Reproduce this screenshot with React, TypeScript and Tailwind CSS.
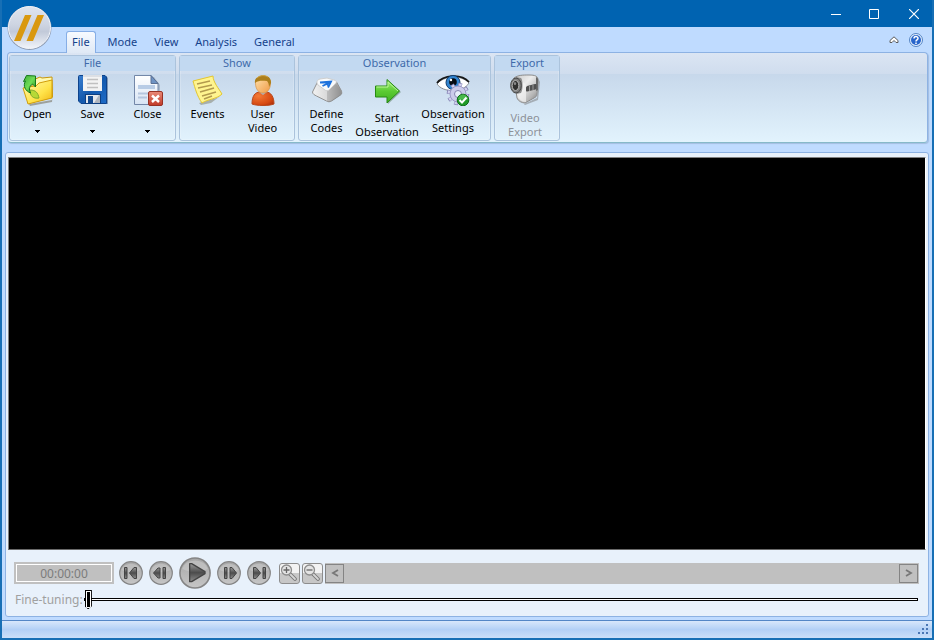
import React, { useState } from 'react'

const Logo = () => (
  <svg width="46" height="46" viewBox="0 0 46 46" aria-hidden="true">
    <defs>
      <linearGradient id="orb" x1="0" y1="0" x2="0" y2="1">
        <stop offset="0" stopColor="#dfe4ee" />
        <stop offset="0.42" stopColor="#ced5e2" />
        <stop offset="0.6" stopColor="#c2cad9" />
        <stop offset="1" stopColor="#f1f4fa" />
      </linearGradient>
    </defs>
    <circle cx="23.500" cy="23" r="22" fill="#8e9bb2" />
    <circle cx="23.500" cy="22.500" r="21" fill="url(#orb)" stroke="#f2f5fa" />
    <path d="M19 10h6.500L14.500 36H8zM31.500 10H38L27 36h-6.500z" fill="#d9980f" />
  </svg>
)

const OpenIcon = () => (
  <svg width="34" height="32" viewBox="0 0 34 32">
    <defs>
      <linearGradient id="folder" x1="0" y1="0" x2="1" y2="1">
        <stop offset="0" stopColor="#fffbb5" />
        <stop offset="0.6" stopColor="#ffe34a" />
        <stop offset="1" stopColor="#f0b310" />
      </linearGradient>
      <linearGradient id="leaf" x1="0" y1="0" x2="1" y2="1">
        <stop offset="0" stopColor="#3fae3a" />
        <stop offset="0.5" stopColor="#6fdc55" />
        <stop offset="1" stopColor="#138a1b" />
      </linearGradient>
    </defs>
    <path d="M8 30l23-4 2-21-2 23-22 4z" fill="#7a7565" opacity=".6" />
    <path d="M12 6l7-3 2 1 10-1 .5 20L8 29z" fill="#fff9b0" stroke="#c8960c" />
    <path d="M2 14l4-1 9-1 3-3 13-3v18L7 30z" fill="url(#folder)" stroke="#d19d0a" />
    <path d="M9 16c6 0 8 3 9 8-6 1-9-2-9-8z" fill="#b7d936" stroke="#7fab2a" />
    <path d="M5.500 1.500L14.500 2v11l-3-3c-3 2-4 5-2 9-5-2-8-7-5-12l-2 .5z" fill="url(#leaf)" stroke="#14771a" />
  </svg>
)

const SaveIcon = () => (
  <svg width="32" height="32" viewBox="0 0 32 32">
    <defs>
      <linearGradient id="disk" x1="0" y1="0" x2="1" y2="1">
        <stop offset="0" stopColor="#3a7fd0" />
        <stop offset="0.5" stopColor="#1459ad" />
        <stop offset="1" stopColor="#1e6cc8" />
      </linearGradient>
    </defs>
    <path d="M3 2h26l2 2v26H5z" fill="#5e7ba0" opacity=".7" />
    <path d="M1.500 2.500A1 1 0 0 1 2.500 1.500H28l1.500 1.500V29.500H4L1.500 27z" fill="url(#disk)" stroke="#0e438c" />
    <path d="M6 2h19v15H6z" fill="#f3f3f3" />
    <path d="M6 1h19v2H6z" fill="#dcdfe4" />
    <path d="M10 5.500h11M10 9.500h11M10 13.500h11" stroke="#c0c0c0" strokeWidth="1.500" />
    <path d="M8 20h16v10H8z" fill="#0d3e80" />
    <path d="M9 21h14v8H9z" fill="#e4e7ec" />
    <path d="M11 22h5v7h-5z" fill="#124a91" />
    <path d="M17 29l5-8h1v8z" fill="#aeb5bf" />
  </svg>
)

const CloseIcon = () => (
  <svg width="32" height="32" viewBox="0 0 32 32">
    <defs>
      <linearGradient id="paper" x1="0" y1="0" x2="0" y2="1">
        <stop offset="0" stopColor="#ffffff" />
        <stop offset="1" stopColor="#d7e4f4" />
      </linearGradient>
      <linearGradient id="redBox" x1="0" y1="0" x2="0" y2="1">
        <stop offset="0" stopColor="#e98a78" />
        <stop offset="1" stopColor="#c03a28" />
      </linearGradient>
    </defs>
    <path d="M4 3h18l6 8v20H4z" fill="#8290a5" opacity=".5" />
    <path d="M2.500 1.500H19l7 8V30.500H2.500z" fill="url(#paper)" stroke="#7387a8" />
    <path d="M19 1.500V9.500h7z" fill="#6e93c4" stroke="#5b7094" />
    <path d="M6 11h17v4H6z" fill="#b8cce6" />
    <path d="M6 19.500h11M6 23.500h9" stroke="#b5c6de" strokeWidth="2" />
    <rect x="16.500" y="17.500" width="14" height="14" rx="1.500" fill="url(#redBox)" stroke="#973225" />
    <path d="M20 21.500l7 6.500M27 21.500L20 28" stroke="#fff" strokeWidth="2.400" />
  </svg>
)

const EventsIcon = () => (
  <svg width="32" height="32" viewBox="0 0 32 32">
    <path d="M7 29l10-3c3-1 10-2 14-6l-12 9-10 2z" fill="#8a8c7c" opacity=".6" />
    <path d="M1 7L21 2c0 6 6 13 9 18-5 5-14 5-20 9C5 22 3 14 1 7z" fill="#fff48f" stroke="#e3c62f" />
    <path d="M5 10l13-3M6 14l14-3M8 18l14-4M10 22l14-4M12 25l8-3" stroke="#b39a4d" strokeWidth="1.500" />
  </svg>
)

const UserIcon = () => (
  <svg width="32" height="32" viewBox="0 0 32 32">
    <defs>
      <radialGradient id="body" cx=".3" cy=".3" r=".9">
        <stop offset="0" stopColor="#f37a36" />
        <stop offset="0.7" stopColor="#d64912" />
        <stop offset="1" stopColor="#a82d0a" />
      </radialGradient>
      <linearGradient id="face" x1="0" y1="0" x2="1" y2="1">
        <stop offset="0" stopColor="#ffe2ad" />
        <stop offset="1" stopColor="#f09a45" />
      </linearGradient>
    </defs>
    <path d="M5 30c0-8 3-12 8-12h6c5 0 8 5 8 12-5 2-17 2-22 0z" fill="url(#body)" stroke="#b9471a" />
    <path d="M12 18h8l-4 3z" fill="#a9b5c1" />
    <path d="M8.500 9c0-9 15-9 15 0 0 6-3 10-7.500 10S8.500 15 8.500 9z" fill="url(#face)" stroke="#d89043" strokeWidth=".7" />
    <path d="M8 9C6 0 25-2 24 9l-2 4c0-3-1-5-2-6-4 0-8-1-12 2z" fill="#ad7f1c" />
    <path d="M10 4c3-3 8-3 11-1" stroke="#cfa548" fill="none" />
  </svg>
)

const KeyIcon = () => (
  <svg width="32" height="32" viewBox="0 0 32 32">
    <defs>
      <linearGradient id="keySide" x1="0" y1="0" x2="1" y2="0">
        <stop offset="0" stopColor="#f2f2f2" />
        <stop offset="0.5" stopColor="#d9d9d9" />
        <stop offset="1" stopColor="#9a9a9a" />
      </linearGradient>
    </defs>
    <path d="M7 7L1.500 18c0 2 2 3 4 4l10 5c2 1 3 1 5 0l9-6c2-1 1-3 1-4l-5-9z" fill="url(#keySide)" stroke="#929292" />
    <path d="M16 17v10c2 1 3 1 5 0l9-6c1-2 0-5-5-11z" fill="#777" opacity=".3" />
    <path d="M9 5l7-1 7 2c3 1 3 2 1 4l-6 6c-1 1-3 1-4 0L7 11C5 8 6 6 9 5z" fill="#f8fafc" stroke="#cfcfcf" />
    <path d="M9 8.500l11-1L17 13.500M19.500 8l-8 4M14 8l3.500 3.500" stroke="#1d72dd" strokeWidth="1.900" fill="none" />
  </svg>
)

const ArrowIcon = () => (
  <svg width="32" height="32" viewBox="0 0 32 32">
    <defs>
      <linearGradient id="go" x1="0" y1="0" x2="0" y2="1">
        <stop offset="0" stopColor="#a6f07a" />
        <stop offset="0.5" stopColor="#5bcb32" />
        <stop offset="1" stopColor="#3fae22" />
      </linearGradient>
    </defs>
    <path d="M5 13h12V6l13 12-13 12v-7H5z" fill="#6d8c79" opacity=".6" />
    <path d="M4.500 12H16V5.500L28.500 17 16 29V23H4.500z" fill="url(#go)" stroke="#278a12" />
    <path d="M5.500 13H17V8L27 17" fill="none" stroke="#b9f497" />
  </svg>
)

const SettingsIcon = () => (
  <svg width="34" height="32" viewBox="0 0 34 32">
    <path d="M1 10C7 2 25 0 33 9c-6 10-26 10-32 1z" fill="#fff" stroke="#8b8f95" />
    <path d="M1 9C7 1 25-1 33 8" fill="none" stroke="#171717" strokeWidth="1.800" />
    <circle cx="17" cy="8.500" r="7" fill="#3284cf" stroke="#123e70" />
    <circle cx="17" cy="8" r="3.800" fill="#050b12" />
    <circle cx="15" cy="6" r="1.200" fill="#fff" />
    <g transform="translate(22 20)">
      <circle r="9" fill="none" stroke="#8381b3" strokeWidth="4.500" strokeDasharray="3.500 3.570" />
      <circle r="8.700" fill="none" stroke="#d0d0ee" strokeWidth="3.500" strokeDasharray="2.700 4.130" strokeDashoffset="-.4" />
      <circle r="8" fill="#cbcbea" stroke="#9a98c6" />
      <circle r="3.500" fill="#e7eefa" stroke="#8583af" />
    </g>
    <circle cx="27" cy="26" r="5.800" fill="#1f9a27" stroke="#0e6e18" />
    <path d="M21.800 25c2-6 8.500-6 10.500 0-4 2-7 0-10.500 0z" fill="#5cc45c" opacity=".7" />
    <path d="M23.500 26l2.500 2.500 4.500-5" stroke="#fff" strokeWidth="2" fill="none" />
  </svg>
)

const CameraIcon = () => (
  <svg width="32" height="32" viewBox="0 0 32 32">
    <defs>
      <linearGradient id="cam" x1="0" y1="0" x2="1" y2="1">
        <stop offset="0" stopColor="#c9c9c9" />
        <stop offset="0.4" stopColor="#ececec" />
        <stop offset="0.75" stopColor="#b4b4b4" />
        <stop offset="1" stopColor="#6f6f6f" />
      </linearGradient>
    </defs>
    <path d="M7 22l8 8 13-6 2-18 1 2-2 18-13 5z" fill="#777" opacity=".5" />
    <path d="M5 4c4-3 9-3 15-3 6 0 9 1 9 5l-1 14c0 2-1 3-3 4l-9 5c-3 0-7-2-8-5z" fill="url(#cam)" stroke="#8d8d8d" />
    <path d="M27 3c2 1 2.500 2 2.300 5L29 16l-2 1z" fill="#686868" />
    <path d="M13 8c3 1 4 2 4 5v15c-4 0-6-2-8-5z" fill="#f4f4f4" opacity=".7" />
    <path d="M17 13.500c0-1 1-1.500 2-1.800l7-1.700c1 0 1.500 0 1.500 1v3c0 1-1 1.500-2 1.800l-7 1.700c-1 0-1.500 0-1.500-1z" fill="#505050" />
    <path d="M20.500 12v5M24 11v5" stroke="#9a9a9a" />
    <path d="M7 3l5 1c2 2 2 12 0 15l-5 1z" fill="#8d8d8d" />
    <ellipse cx="7" cy="11.500" rx="5.300" ry="7.500" fill="#818181" stroke="#454545" />
    <ellipse cx="6.500" cy="11.500" rx="3.300" ry="5" fill="#303030" stroke="#b4b4b4" />
    <ellipse cx="6" cy="9.500" rx="1.200" ry="1.600" fill="#8a8a8a" />
  </svg>
)

type Tool = {
  label: string[]
  icon: React.ReactNode
  width: string
  menu?: boolean
  low?: boolean
  disabled?: boolean
}

const groups: { title: string; pad: string; tools: Tool[] }[] = [
  {
    title: 'File',
    pad: '',
    tools: [
      { label: ['Open'], icon: <OpenIcon />, width: 'w-[55px]', menu: true },
      { label: ['Save'], icon: <SaveIcon />, width: 'w-[55px]', menu: true },
      { label: ['Close'], icon: <CloseIcon />, width: 'w-[55px]', menu: true }
    ]
  },
  {
    title: 'Show',
    pad: 'pr-1',
    tools: [
      { label: ['Events'], icon: <EventsIcon />, width: 'w-[55px]' },
      { label: ['User', 'Video'], icon: <UserIcon />, width: 'w-[55px]' }
    ]
  },
  {
    title: 'Observation',
    pad: 'pr-1',
    tools: [
      { label: ['Define', 'Codes'], icon: <KeyIcon />, width: 'w-[55px]' },
      { label: ['Start', 'Observation'], icon: <ArrowIcon />, width: 'w-[66px]', low: true },
      { label: ['Observation', 'Settings'], icon: <SettingsIcon />, width: 'w-[66px]' }
    ]
  },
  {
    title: 'Export',
    pad: 'pr-1',
    tools: [{ label: ['Video', 'Export'], icon: <CameraIcon />, width: 'w-[60px]', low: true, disabled: true }]
  }
]

const ToolButton = ({ tool }: { tool: Tool }) => (
  <button
    disabled={tool.disabled}
    className={`flex flex-col items-center pt-[3px] text-[11px] leading-[14px] ${tool.width} ${
      tool.disabled ? 'text-[#8d9299]' : 'text-black'
    }`}
  >
    <span className={tool.low ? 'h-[37px]' : 'h-[33px]'}>{tool.icon}</span>
    {tool.label.map((line) => (
      <span key={line}>{line}</span>
    ))}
    {tool.menu && (
      <svg width="5" height="3" viewBox="0 0 5 3" className="mt-[9px]" shapeRendering="crispEdges">
        <path d="M0 0h5v1H0zM1 1h3v1H1zM2 2h1v1H2z" />
      </svg>
    )}
  </button>
)

const tabs = ['File', 'Mode', 'View', 'Analysis', 'General']

const glyphs = {
  start: 'M5.500 6.500h2.500v11H5.500zM15 6.500h2.500v11H15L10.500 12z',
  back: 'M4.500 12L9 7h2v10H9zM14 6.500h2.500v11H14z',
  forward: 'M7.500 6.500H10v11H7.500zM13 6.500h2L19.500 12l-4.500 5.500h-2z',
  end: 'M16 6.500h2.500v11H16zM6.500 6.500H9L13.500 12 9 17.500H6.500z',
  play: 'M8 5h1.500L19.500 11v1.500L9.500 18.500H8z'
}

const RoundButton = ({ name, label }: { name: keyof typeof glyphs; label: string }) => (
  <button aria-label={label} className={`shrink-0 rounded-full ${name === 'play' ? 'size-8' : 'size-6'}`}>
    <svg viewBox="0 0 24 24" className="size-full">
      <defs>
        <linearGradient id={`disc-${name}`} x1="0" y1="0" x2="0" y2="1">
          <stop offset="0" stopColor="#a6a6a6" />
          <stop offset="1" stopColor="#c6c6c6" />
        </linearGradient>
        <linearGradient id={`glyph-${name}`} x1="0" y1="0" x2="0" y2="1">
          <stop offset="0" stopColor="#9a9a9a" />
          <stop offset="0.5" stopColor="#4c4c4c" />
          <stop offset="1" stopColor="#8c8c8c" />
        </linearGradient>
      </defs>
      <circle cx="12" cy="12" r="11.300" fill={`url(#disc-${name})`} stroke="#858585" strokeWidth="1.200" />
      <path d="M2.500 9C5 .5 19 .5 21.500 9c-6 3-13 3-19 0z" fill="#d0d0d0" opacity=".5" />
      <path d={glyphs[name]} fill={`url(#glyph-${name})`} stroke="#444" strokeWidth="1" strokeLinejoin="round" />
    </svg>
  </button>
)

const ZoomButton = ({ label, plus }: { label: string; plus?: boolean }) => (
  <button
    aria-label={label}
    className="size-[21px] shrink-0 rounded-[3px] border border-[#8d8d8d] bg-linear-to-b from-[#f3f3f3] from-50% to-[#c7c7c7] to-50%"
  >
    <svg width="19" height="19" viewBox="0 0 19 19">
      <path d="M10 10l5 5" stroke="#777" strokeWidth="3.800" strokeLinecap="round" />
      <path d="M10 10l5 5" stroke="#d5d5d5" strokeWidth="1.800" strokeLinecap="round" />
      <circle cx="6.500" cy="6" r="5" fill="#e4e4e4" stroke="#8d8d8d" strokeWidth="1.300" />
      <path d={plus ? 'M3.500 6h6M6.500 3v6' : 'M3.500 6h6'} stroke="#666" strokeWidth="1.300" />
    </svg>
  </button>
)

const ScrollButton = ({ label, path }: { label: string; path: string }) => (
  <button aria-label={label} className="flex size-[19px] items-center justify-center border border-[#848484]">
    <svg width="8" height="8" viewBox="0 0 8 8">
      <path d={path} fill="none" stroke="#777" strokeWidth="1.800" />
    </svg>
  </button>
)

const App: React.FC = () => {
  const [activeTab, setActiveTab] = useState('File')
  const [fine, setFine] = useState(0)

  return (
    <div className="relative flex min-h-screen flex-col border-2 border-t-0 border-[#176fb5] bg-[#bfdbff] font-['Noto_Sans',sans-serif]">
      <header className="flex h-[27px] shrink-0 items-center justify-end bg-[#0063b1]">
        <button aria-label="Minimize" className="flex w-8 justify-center">
          <svg width="10" height="10" viewBox="0 0 10 10"><path d="M0 5.500h10" stroke="#fff" /></svg>
        </button>
        <button aria-label="Maximize" className="flex w-11 justify-center">
          <svg width="10" height="10" viewBox="0 0 10 10"><path d="M.5.5h9v9h-9z" fill="none" stroke="#fff" /></svg>
        </button>
        <button aria-label="Close window" className="flex w-9 justify-center">
          <svg width="10" height="10" viewBox="0 0 10 10"><path d="M0 0l10 10M10 0L0 10" stroke="#fff" strokeWidth="1.200" /></svg>
        </button>
      </header>

      {/* application button overlaps the title bar and the tabs */}
      <button aria-label="Application menu" className="absolute top-[5px] left-[4px] z-10">
        <Logo />
      </button>

      <nav className="flex h-[25px] shrink-0 items-end justify-between pr-[9px] pl-16 text-[11px] text-[#15428b]">
        <div className="flex items-end gap-px" role="tablist">
          {tabs.map((tab) => (
            <button
              key={tab}
              role="tab"
              aria-selected={tab === activeTab}
              onClick={() => setActiveTab(tab)}
              className={
                tab === activeTab
                  ? 'relative z-10 mr-[3px] -mb-px h-[22px] rounded-t-[3px] border border-b-0 border-[#86aee6] bg-linear-to-b from-[#f7faff] to-[#dfe9f5] px-[5px]'
                  : 'h-5 px-2'
              }
            >
              {tab}
            </button>
          ))}
        </div>
        <div className="flex items-center gap-[10px] pb-[5px]">
          <button aria-label="Collapse ribbon">
            <svg width="10" height="8" viewBox="0 0 10 8">
              <path d="M5 .8L1 4.500v2h2l2-2 2 2h2v-2z" fill="#fff" stroke="#5a5a5a" />
            </svg>
          </button>
          <button aria-label="Help">
            <svg width="14" height="14" viewBox="0 0 14 14">
              <circle cx="7" cy="7" r="6.500" fill="#e3effd" stroke="#5484c4" />
              <circle cx="7" cy="7" r="5" fill="#2865cb" />
              <path d="M5 5.500C5 3 9 3 9 5.300 9 7 7 6.800 7 8.500M7 9.500V11" fill="none" stroke="#fff" strokeWidth="1.500" />
            </svg>
          </button>
        </div>
      </nav>

      <section className="mr-1 ml-[5px] flex gap-[3px] rounded-[4px] border border-[#8db2e3] border-b-[#86b9c9] bg-[linear-gradient(#dbe5f3,#d0ddee_23%,#c7d8eb_24%,#e2f3fd)] p-px pt-0.5 shadow-[1px_1px_1px_#a3bde0]">
        {groups.map((group) => (
          <div key={group.title} className="h-[86px] rounded-[3px] border border-[#abc3dc] shadow-[inset_0_0_0_1px_#ffffff30]">
            <h2 className="h-[15px] bg-[#c2d9f1] text-center text-[11px] leading-[14px] text-[#3e6aaa]">{group.title}</h2>
            <div className={`flex ${group.pad}`}>
              {group.tools.map((tool) => (
                <ToolButton key={tool.label.join(' ')} tool={tool} />
              ))}
            </div>
          </div>
        ))}
      </section>

      <main className="mx-[3px] mt-[9px] mb-[3px] flex flex-1 flex-col rounded-[3px] border border-[#8db2e3] bg-[#e8f1fb] px-0.5 pt-1">
        <div className="flex-1 border border-t-[#808080] border-r-white border-b-[#696969] border-l-[#808080] bg-black" />
        <div className="mt-[7px] flex h-8 items-center pr-[7px] pl-[6px]">
          <input
            aria-label="Current time"
            readOnly
            value="00:00:00"
            className="h-[22px] w-[100px] border-2 border-[#c0c0c0] bg-[#c0c0c0] text-center text-xs text-[#7c7c7c] shadow-[inset_0_0_0_1px_white]"
          />
          <div className="ml-[5px] flex items-center gap-[6px]">
            <RoundButton name="start" label="Go to start" />
            <RoundButton name="back" label="Step back" />
            <RoundButton name="play" label="Play" />
            <RoundButton name="forward" label="Step forward" />
            <RoundButton name="end" label="Go to end" />
          </div>
          <div className="mr-0.5 ml-2 flex gap-0.5">
            <ZoomButton label="Zoom in" plus />
            <ZoomButton label="Zoom out" />
          </div>
          <div className="flex h-[21px] flex-1 items-center justify-between bg-[#c0c0c0] pr-px">
            <ScrollButton label="Scroll left" path="M7 1L2 4l5 3" />
            <ScrollButton label="Scroll right" path="M1 1l5 3-5 3" />
          </div>
        </div>
        <div className="mb-[6px] flex h-[21px] items-center gap-px pr-2 pl-[7px]">
          <label htmlFor="fine" className="text-xs text-[#a0a0a0]">Fine-tuning:</label>
          <input
            id="fine"
            type="range"
            min={0}
            max={100}
            value={fine}
            onChange={(e) => setFine(Number(e.target.value))}
            className="h-[19px] flex-1 appearance-none bg-transparent [&::-webkit-slider-runnable-track]:h-[3px] [&::-webkit-slider-runnable-track]:border [&::-webkit-slider-runnable-track]:border-black [&::-webkit-slider-runnable-track]:bg-white [&::-webkit-slider-thumb]:-mt-[9px] [&::-webkit-slider-thumb]:h-[19px] [&::-webkit-slider-thumb]:w-[7px] [&::-webkit-slider-thumb]:appearance-none [&::-webkit-slider-thumb]:border [&::-webkit-slider-thumb]:border-black [&::-webkit-slider-thumb]:bg-black [&::-webkit-slider-thumb]:shadow-[inset_0_0_0_1px_white] [&::-webkit-slider-thumb]:[clip-path:polygon(0_0,100%_0,100%_85%,50%_100%,0_85%)]"
          />
        </div>
      </main>

      <footer className="flex h-[18px] shrink-0 items-end justify-end border-t border-[#5486c6] bg-linear-to-b from-[#d8e7fb] via-[#b3d0f6] to-[#cbdff9] pr-[3px] pb-[3px]">
        <svg width="11" height="11" viewBox="0 0 11 11" fill="#4a76b4" shapeRendering="crispEdges">
          <path d="M8 0h2v2H8zM4 4h2v2H4zM8 4h2v2H8zM0 8h2v2H0zM4 8h2v2H4zM8 8h2v2H8z" />
        </svg>
      </footer>
    </div>
  )
}

export default App
